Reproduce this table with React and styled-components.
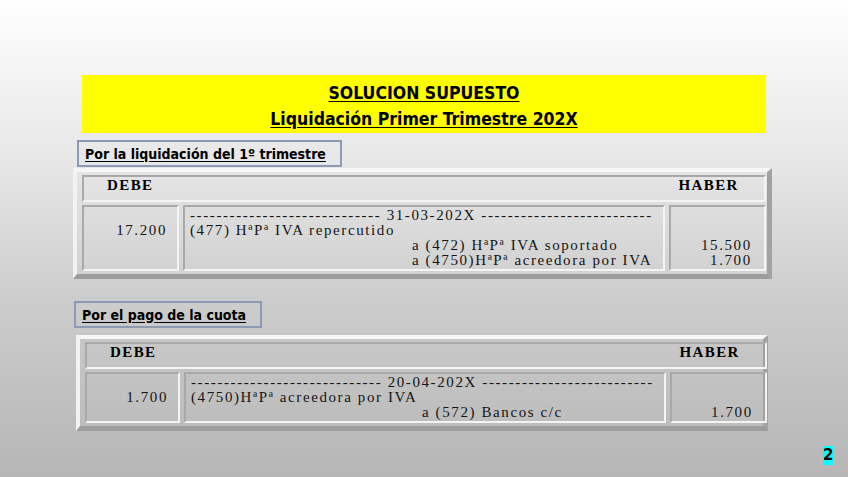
import React from "react"
import styled, { createGlobalStyle } from "styled-components"

const GlobalStyle = createGlobalStyle`
  html, body {
    margin: 0;
    padding: 0;
  }
  body {
    width: 848px;
    height: 477px;
    overflow: hidden;
    background: linear-gradient(180deg, #ffffff 0%, #f6f6f6 12%, #e6e6e6 35%, #cdcdcd 62%, #b6b6b6 100%);
  }
`

const dashes = n => "-".repeat(n)

const entries = [
  {
    label: "Por la liquidación del 1º trimestre",
    labelLeft: 77,
    left: 73,
    width: 699,
    labelGap: 7,
    gapAfterLabel: 1,
    debeCol: 97,
    haberCol: 97,
    date: "31-03-202X",
    debe: "17.200",
    cargo: "(477) HªPª IVA repercutido",
    indent: 222,
    abonos: [
      { text: "a (472) HªPª IVA soportado", amount: "15.500" },
      { text: "a (4750)HªPª acreedora por IVA", amount: "1.700" },
    ],
  },
  {
    label: "Por el pago de la cuota",
    labelLeft: 74,
    left: 76,
    width: 692,
    labelGap: 22,
    gapAfterLabel: 7,
    debeCol: 95,
    haberCol: 97,
    date: "20-04-202X",
    debe: "1.700",
    cargo: "(4750)HªPª acreedora por IVA",
    indent: 231,
    abonos: [{ text: "a (572) Bancos c/c", amount: "1.700" }],
  },
]

const App = () => (
  <Slide>
    <GlobalStyle />
    <Banner>
      <BannerLine>SOLUCION SUPUESTO</BannerLine>
      <BannerLine>Liquidación Primer Trimestre 202X</BannerLine>
    </Banner>
    {entries.map(e => (
      <React.Fragment key={e.date}>
        <Label $left={e.labelLeft} $top={e.labelGap}>
          <span>{e.label}</span>
        </Label>
        <Ledger
          $left={e.left}
          $width={e.width}
          $top={e.gapAfterLabel}
          $debe={e.debeCol}
          $haber={e.haberCol}
        >
          <HeaderCell>
            <span>DEBE</span>
            <span>HABER</span>
          </HeaderCell>
          <Cell $align="right">
            <Line>&nbsp;</Line>
            <Line>{e.debe}</Line>
          </Cell>
          <Cell>
            <Line>
              {dashes(29)} {e.date} {dashes(26)}
            </Line>
            <Line>{e.cargo}</Line>
            {e.abonos.map(a => (
              <Line key={a.text} $indent={e.indent}>
                {a.text}
              </Line>
            ))}
          </Cell>
          <Cell $align="right" $right={12}>
            <Line>&nbsp;</Line>
            <Line>&nbsp;</Line>
            {e.abonos.map(a => (
              <Line key={a.text}>{a.amount}</Line>
            ))}
          </Cell>
        </Ledger>
      </React.Fragment>
    ))}
    <PageNumber>2</PageNumber>
  </Slide>
)

export default App

const Slide = styled.div`
  width: 848px;
  height: 477px;
  box-sizing: border-box;
  padding-top: 75px;
  display: flex;
  flex-direction: column;
  align-items: flex-start;
`

const Banner = styled.div`
  margin-left: 82px;
  width: 684px;
  height: 58px;
  box-sizing: border-box;
  padding-top: 5px;
  background: #ffff00;
  display: flex;
  flex-direction: column;
  align-items: center;
`

const BannerLine = styled.div`
  font-family: "DejaVu Sans Condensed", "Liberation Sans Narrow", "DejaVu Sans", sans-serif;
  font-stretch: condensed;
  font-weight: bold;
  font-size: 17.5px;
  line-height: 26px;
  color: #000;
  text-decoration: underline;
  text-underline-offset: 2px;
`

const Label = styled.div`
  margin-left: ${p => p.$left}px;
  margin-top: ${p => p.$top}px;
  height: 27px;
  box-sizing: border-box;
  border: 2px solid #8c9bb3;
  padding: 0 14px 0 6px;
  display: flex;
  align-items: center;
  font-family: "DejaVu Sans Condensed", "Liberation Sans Narrow", "DejaVu Sans", sans-serif;
  font-stretch: condensed;
  font-weight: bold;
  font-size: 14px;
  color: #000;
  span {
    text-decoration: underline;
    text-underline-offset: 2px;
  }
`

const Ledger = styled.div`
  margin-left: ${p => p.$left}px;
  margin-top: ${p => p.$top}px;
  width: ${p => p.$width}px;
  box-sizing: border-box;
  border-style: solid;
  border-width: 4px 5px 5px 4px;
  border-color: #f7f7f7 #a2a2a2 #9c9c9c #f2f2f2;
  padding: 3px 2px 3px 5px;
  display: grid;
  grid-template-columns: ${p => p.$debe}px 1fr ${p => p.$haber}px;
  column-gap: 4px;
  row-gap: 3px;
  font-family: "Liberation Serif", "Times New Roman", serif;
  font-size: 15px;
  letter-spacing: 1.6px;
  color: #151515;
`

const bevel = `
  border-style: solid;
  border-width: 2px;
  border-color: #a9a9a9 #f4f4f4 #f4f4f4 #a9a9a9;
  box-sizing: border-box;
`

const HeaderCell = styled.div`
  ${bevel}
  grid-column: 1 / -1;
  height: 27px;
  padding: 1px 25px 0 23px;
  display: flex;
  justify-content: space-between;
  font-weight: bold;
  letter-spacing: 1.4px;
  line-height: 15px;
  color: #000;
`

const Cell = styled.div`
  ${bevel}
  padding: 1px ${p => p.$right || 10}px 1px 5px;
  text-align: ${p => p.$align || "left"};
`

const Line = styled.div`
  line-height: 15px;
  white-space: nowrap;
  padding-left: ${p => p.$indent || 0}px;
`

const PageNumber = styled.div`
  align-self: flex-end;
  margin: auto 15px 12px 0;
  width: 10px;
  height: 19px;
  background: #00ffff;
  font-family: "DejaVu Sans", sans-serif;
  font-weight: bold;
  font-size: 15px;
  line-height: 19px;
  text-align: center;
  color: #000;
`
